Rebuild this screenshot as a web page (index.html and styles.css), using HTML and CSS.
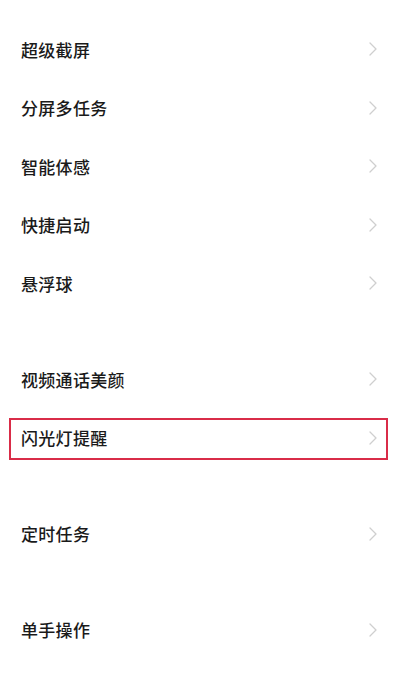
FILE: index.html
```html
<!DOCTYPE html>
<html lang="zh-CN">
<head>
<meta charset="utf-8">
<link rel="stylesheet" href="styles.css">
</head>
<body>
<div class="page">
  <ul class="group">
    <li class="row"><span class="label">超级截屏</span><svg class="chev" viewBox="0 0 8 14"><path d="M1 1 L7 7 L1 13"/></svg></li>
    <li class="row"><span class="label">分屏多任务</span><svg class="chev" viewBox="0 0 8 14"><path d="M1 1 L7 7 L1 13"/></svg></li>
    <li class="row"><span class="label">智能体感</span><svg class="chev" viewBox="0 0 8 14"><path d="M1 1 L7 7 L1 13"/></svg></li>
    <li class="row"><span class="label">快捷启动</span><svg class="chev" viewBox="0 0 8 14"><path d="M1 1 L7 7 L1 13"/></svg></li>
    <li class="row"><span class="label">悬浮球</span><svg class="chev" viewBox="0 0 8 14"><path d="M1 1 L7 7 L1 13"/></svg></li>
  </ul>
  <ul class="group">
    <li class="row"><span class="label">视频通话美颜</span><svg class="chev" viewBox="0 0 8 14"><path d="M1 1 L7 7 L1 13"/></svg></li>
    <li class="row highlighted"><span class="label">闪光灯提醒</span><svg class="chev" viewBox="0 0 8 14"><path d="M1 1 L7 7 L1 13"/></svg></li>
  </ul>
  <ul class="group">
    <li class="row"><span class="label">定时任务</span><svg class="chev" viewBox="0 0 8 14"><path d="M1 1 L7 7 L1 13"/></svg></li>
  </ul>
  <ul class="group">
    <li class="row"><span class="label">单手操作</span><svg class="chev" viewBox="0 0 8 14"><path d="M1 1 L7 7 L1 13"/></svg></li>
    <li class="row"><span class="label">应用分身</span><svg class="chev" viewBox="0 0 8 14"><path d="M1 1 L7 7 L1 13"/></svg></li>
  </ul>
</div>
</body>
</html>
```

FILE: styles.css
```css
html, body {
  margin: 0;
  padding: 0;
  background: #ffffff;
}
body {
  font-family: "Noto Sans CJK SC", "Noto Sans", sans-serif;
  color: #1a1a1a;
  overflow: hidden;
  height: 681px;
}
.page {
  display: flex;
  flex-direction: column;
  gap: 37.5px;
  padding-top: 20px;
}
.group {
  list-style: none;
  margin: 0;
  padding: 0;
  display: flex;
  flex-direction: column;
}
.row {
  position: relative;
  height: 58.5px;
  display: flex;
  align-items: center;
  justify-content: space-between;
  padding: 0 23px 0 21px;
}
.label {
  font-size: 17px;
  font-weight: 500;
  line-height: 1;
  letter-spacing: 0.3px;
}
.chev {
  width: 8px;
  height: 14px;
  fill: none;
  stroke: #cfcfcf;
  stroke-width: 1.3;
  stroke-linecap: round;
  stroke-linejoin: round;
}
.highlighted::after {
  content: "";
  position: absolute;
  left: 9px;
  right: 12px;
  top: 9.5px;
  bottom: 7px;
  border: 2px solid #d92c48;
  pointer-events: none;
}
```
